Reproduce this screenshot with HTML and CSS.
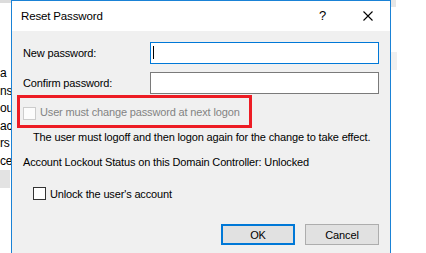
FILE: index.html
```html
<!DOCTYPE html>
<html>
<head>
<meta charset="utf-8">
<link rel="stylesheet" href="styles.css">
</head>
<body>
<div class="desk">
  <div class="bg-topleft"></div>
  <div class="bg-topright"></div>
  <div class="bg-rightbox"></div>
  <div class="bg-text">
    <div class="frag pad-a">a</div>
    <div class="frag">ns</div>
    <div class="frag">ou</div>
    <div class="frag">act</div>
    <div class="frag pad-rs">rs</div>
    <div class="frag pad-ce">ce</div>
  </div>
  <div class="bg-leftbox"></div>

  <div class="dialog">
    <div class="titlebar">
      <span class="title">Reset Password</span>
      <span class="help">?</span>
      <svg class="close" width="10" height="10" viewBox="0 0 10 10"><path d="M0.5 0.5L9.5 9.5M9.5 0.5L0.5 9.5" stroke="#000" stroke-width="1.1" fill="none"/></svg>
    </div>
    <div class="content">
      <div class="row">
        <span class="label">New password:</span>
        <div class="input focused"><span class="caret"></span></div>
      </div>
      <div class="row row2">
        <span class="label">Confirm password:</span>
        <div class="input"></div>
      </div>
      <div class="highlight">
        <span class="cb disabled"></span>
        <span class="cb-label disabled-text">User must change password at next logon</span>
      </div>
      <div class="note">The user must logoff and then logon again for the change to take effect.</div>
      <div class="status">Account Lockout Status on this Domain Controller: Unlocked</div>
      <div class="unlock">
        <span class="cb"></span>
        <span class="cb-label">Unlock the user's account</span>
      </div>
      <div class="buttons">
        <div class="btn default">OK</div>
        <div class="btn">Cancel</div>
      </div>
    </div>
  </div>
</div>
</body>
</html>
```
FILE: styles.css
```css
html, body {
  margin: 0;
  padding: 0;
  background: #fff;
}
body {
  font-family: "Liberation Sans", Arial, sans-serif;
  font-size: 11px;
  letter-spacing: -0.15px;
  color: #000;
}
.desk {
  position: relative;
  width: 426px;
  height: 253px;
  overflow: hidden;
  background: #fff;
}
.bg-topleft {
  position: absolute;
  left: 0;
  top: 0;
  width: 11px;
  height: 3px;
  background: #dcdcdc;
}
.bg-topright {
  position: absolute;
  left: 391px;
  top: 0;
  width: 5px;
  height: 7px;
  background: #e6e6e6;
}
.bg-rightbox {
  position: absolute;
  left: 391px;
  top: 52px;
  width: 6px;
  height: 18px;
  background: #f0f0f0;
}
.bg-text {
  position: absolute;
  left: 0;
  top: 65px;
  width: 11px;
  overflow: hidden;
  text-align: right;
  font-size: 12px;
}
.frag {
  height: 17.6px;
  line-height: 17.6px;
  white-space: nowrap;
}
.pad-a {
  padding-right: 6px;
}
.pad-rs {
  padding-right: 4px;
}
.pad-ce {
  padding-right: 3px;
}
.bg-leftbox {
  position: absolute;
  left: 0;
  top: 170px;
  width: 10px;
  height: 18px;
  background: #e3e3e3;
}
.dialog {
  position: absolute;
  left: 11px;
  top: 0;
  width: 378px;
  height: 270px;
  border: 1px solid #1a82d6;
  background: #f0f0f0;
}
.titlebar {
  height: 30px;
  background: #fff;
  display: flex;
  align-items: center;
  position: relative;
}
.title {
  padding-left: 9px;
  font-size: 11.5px;
}
.help {
  position: absolute;
  left: 307px;
  top: 7px;
  font-size: 13px;
}
.close {
  position: absolute;
  left: 351px;
  top: 10px;
}
.content {
  padding: 11px 11px 0 11px;
}
.row {
  display: flex;
  align-items: center;
  height: 22px;
}
.row2 {
  margin-top: 8px;
}
.label {
  width: 127px;
}
.input {
  width: 228px;
  height: 20px;
  border: 1px solid #7a7a7a;
  background: #fff;
  position: relative;
}
.input.focused {
  border-color: #0078d7;
}
.caret {
  position: absolute;
  left: 2px;
  top: 3px;
  width: 1px;
  height: 13px;
  background: #000;
}
.highlight {
  margin-top: 1px;
  margin-left: -6px;
  width: 229px;
  height: 27px;
  border: 3px solid #ed1c24;
  display: flex;
  align-items: center;
}
.highlight .cb {
  margin-left: 3px;
  margin-top: 3px;
}
.highlight .cb-label {
  margin-top: 1px;
}
.cb {
  width: 11px;
  height: 11px;
  border: 1px solid #333;
  background: #fff;
  flex: none;
}
.cb.disabled {
  border-color: #cccccc;
  background: #fcfcfc;
}
.cb-label {
  margin-left: 4px;
  white-space: nowrap;
}
.disabled-text {
  color: #838383;
}
.note {
  margin-top: 1px;
  padding-left: 10px;
  height: 16px;
  line-height: 16px;
  white-space: nowrap;
}
.status {
  margin-top: 9px;
  height: 16px;
  line-height: 16px;
  white-space: nowrap;
}
.unlock {
  margin-top: 15px;
  height: 17px;
  padding-left: 10px;
  display: flex;
  align-items: center;
}
.buttons {
  margin-top: 22px;
  display: flex;
  justify-content: flex-end;
  gap: 10px;
}
.btn {
  width: 72px;
  height: 19px;
  border: 1px solid #adadad;
  background: #e1e1e1;
  display: flex;
  align-items: center;
  justify-content: center;
}
.btn.default {
  border: 2px solid #0078d7;
  width: 70px;
  height: 17px;
}
```
